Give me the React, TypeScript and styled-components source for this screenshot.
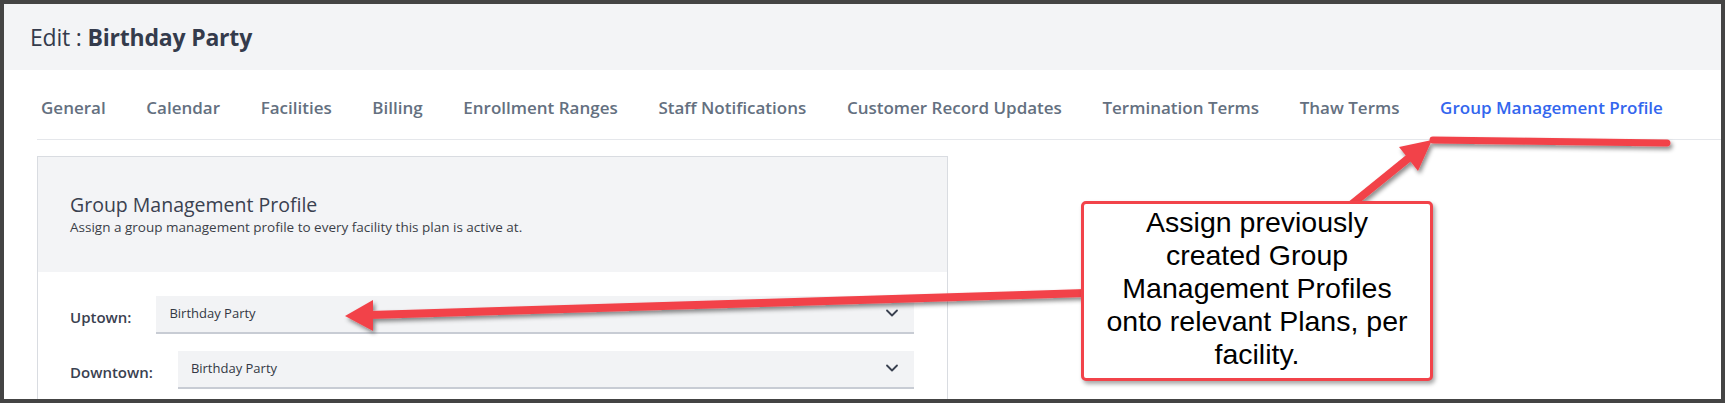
import React from "react";
import styled, { createGlobalStyle } from "styled-components";
import { ChevronDown } from "lucide-react";

const Global = createGlobalStyle`
  html, body { margin: 0; padding: 0; }
  body {
    background: #444444;
    font-family: "Open Sans", "Noto Sans", sans-serif;
  }
`;

const Frame = styled.div`
  position: relative;
  width: 1725px;
  height: 403px;
  box-sizing: border-box;
  padding: 4px;
  background: #444444;
`;

const Page = styled.div`
  height: 100%;
  background: #ffffff;
  overflow: hidden;
`;

const Header = styled.header`
  height: 66px;
  box-sizing: border-box;
  background: #f3f4f6;
  display: flex;
  align-items: center;
  padding-left: 26px;
`;

const Title = styled.h1`
  margin: 0;
  font-size: 23px;
  font-weight: 400;
  color: #343b4c;
  letter-spacing: -0.2px;
  b { font-weight: 700; }
`;

const Body = styled.div`
  padding-left: 33px;
`;

const TabBar = styled.nav`
  height: 70px;
  box-sizing: border-box;
  display: flex;
  align-items: center;
  gap: 40.6px;
  padding-left: 4px;
  border-bottom: 1px solid #e5e7eb;
`;

const Tab = styled.a<{ $active?: boolean }>`
  font-size: 17px;
  font-weight: 600;
  color: ${(p) => (p.$active ? "#3366ee" : "#647080")};
  text-decoration: none;
  white-space: nowrap;
  padding-top: 5px;
`;

const Card = styled.section`
  margin-top: 16px;
  width: 911px;
  box-sizing: border-box;
  border: 1px solid #d9dce1;
`;

const CardHeader = styled.div`
  height: 115px;
  box-sizing: border-box;
  background: #f3f4f6;
  padding: 34px 32px 0;
`;

const CardTitle = styled.h2`
  margin: 0;
  font-size: 19.5px;
  line-height: 27px;
  font-weight: 400;
  color: #3a4150;
`;

const CardSubtitle = styled.p`
  margin: 0;
  font-size: 13.5px;
  line-height: 19px;
  color: #3b3f48;
`;

const CardBody = styled.div`
  padding: 24px 33px 20px 32px;
  display: flex;
  flex-direction: column;
  gap: 17px;
`;

const Row = styled.div`
  display: flex;
  align-items: center;
`;

const Label = styled.label`
  margin-right: 25px;
  font-size: 15px;
  font-weight: 600;
  color: #3a4150;
  padding-top: 4px;
`;

const SelectBox = styled.div`
  flex: 1;
  height: 38px;
  box-sizing: border-box;
  background: #f2f3f5;
  border-bottom: 2px solid #c8ccd4;
  display: flex;
  align-items: center;
  justify-content: space-between;
  padding: 0 12px 2px 13px;
  font-size: 13px;
  color: #333844;
`;

const Callout = styled.div`
  position: absolute;
  left: 1081px;
  top: 201px;
  width: 352px;
  height: 180px;
  box-sizing: border-box;
  border: 3px solid #f2434a;
  border-radius: 5px;
  background: #ffffff;
  box-shadow: 2px 3px 4px rgba(0, 0, 0, 0.35);
  display: flex;
  align-items: center;
  justify-content: center;
  padding-bottom: 5px;
  text-align: center;
  font-family: "Liberation Sans", Arial, sans-serif;
  font-size: 28.5px;
  line-height: 33px;
  color: #000000;
`;

const Overlay = styled.svg`
  position: absolute;
  left: 0;
  top: 0;
  pointer-events: none;
`;

const RED = "#f2434a";

const tabs = [
  "General",
  "Calendar",
  "Facilities",
  "Billing",
  "Enrollment Ranges",
  "Staff Notifications",
  "Customer Record Updates",
  "Termination Terms",
  "Thaw Terms",
  "Group Management Profile",
];

const facilities = ["Uptown", "Downtown"];

export default function App() {
  return (
    <>
      <Global />
      <Frame>
        <Page>
          <Header>
            <Title>
              Edit : <b>Birthday Party</b>
            </Title>
          </Header>
          <Body>
            <TabBar>
              {tabs.map((t) => (
                <Tab key={t} href="#" $active={t === "Group Management Profile"}>
                  {t}
                </Tab>
              ))}
            </TabBar>
            <Card>
              <CardHeader>
                <CardTitle>Group Management Profile</CardTitle>
                <CardSubtitle>
                  Assign a group management profile to every facility this plan is active at.
                </CardSubtitle>
              </CardHeader>
              <CardBody>
                {facilities.map((f) => (
                  <Row key={f}>
                    <Label>{f}:</Label>
                    <SelectBox>
                      <span>Birthday Party</span>
                      <ChevronDown size={20} strokeWidth={2.2} color="#3a4150" />
                    </SelectBox>
                  </Row>
                ))}
              </CardBody>
            </Card>
          </Body>
        </Page>
        <Overlay width={1725} height={403} viewBox="0 0 1725 403">
          <defs>
            <filter id="sh" x="-10%" y="-50%" width="120%" height="200%">
              <feDropShadow dx="2" dy="3" stdDeviation="2" floodColor="#000" floodOpacity="0.45" />
            </filter>
          </defs>
          <g filter="url(#sh)">
            <line x1={1085} y1={293} x2={370} y2={315} stroke={RED} strokeWidth={8} />
            <polygon points="345,316 373,300 373,331" fill={RED} />
            <line x1={1352} y1={204} x2={1410} y2={157} stroke={RED} strokeWidth={8} />
            <polygon points="1432,140 1399,147 1418,171" fill={RED} />
            <line x1={1433} y1={140} x2={1667} y2={143} stroke={RED} strokeWidth={7} strokeLinecap="round" />
          </g>
        </Overlay>
        <Callout>
          <div>
            Assign previously
            <br />
            created Group
            <br />
            Management Profiles
            <br />
            onto relevant Plans, per
            <br />
            facility.
          </div>
        </Callout>
      </Frame>
    </>
  );
}
